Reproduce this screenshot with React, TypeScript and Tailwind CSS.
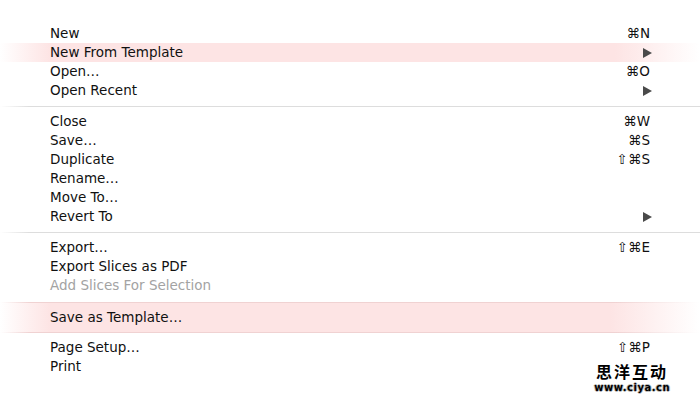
import React from 'react';

type Item = { label: string; shortcut?: string; submenu?: boolean; disabled?: boolean; hot?: boolean };

const groups: Item[][] = [
  [
    { label: 'New', shortcut: '⌘N' },
    { label: 'New From Template', submenu: true, hot: true },
    { label: 'Open…', shortcut: '⌘O' },
    { label: 'Open Recent', submenu: true },
  ],
  [
    { label: 'Close', shortcut: '⌘W' },
    { label: 'Save…', shortcut: '⌘S' },
    { label: 'Duplicate', shortcut: '⇧⌘S' },
    { label: 'Rename…' },
    { label: 'Move To…' },
    { label: 'Revert To', submenu: true },
  ],
  [
    { label: 'Export…', shortcut: '⇧⌘E' },
    { label: 'Export Slices as PDF' },
    { label: 'Add Slices For Selection', disabled: true },
  ],
];

const Arrow = () => (
  <svg width="9" height="10" viewBox="0 0 9 10" className="mr-[-2px]">
    <path d="M0 0 L9 5 L0 10 Z" fill="#4a4a4a" />
  </svg>
);

const Row = ({ item }: { item: Item }) => (
  <div
    className={
      'flex h-[19px] items-center justify-between px-[50px] ' +
      (item.hot ? 'bg-[linear-gradient(to_right,rgba(253,228,228,0),#fde4e4_50px,#fde4e4_615px,rgba(253,228,228,0))]' : '')
    }
  >
    <span className={item.disabled ? 'text-[#a3a3a3]' : 'text-[#111]'}>{item.label}</span>
    {item.shortcut && <span className="text-[#111]">{item.shortcut}</span>}
    {item.submenu && <Arrow />}
  </div>
);

const Separator = () => (
  <div className="pt-[6px] pb-[5px]">
    <div className="h-px bg-[linear-gradient(to_right,rgba(221,221,221,0),#dddddd_30px)]" />
  </div>
);

export default function App() {
  return (
    <div
      className="relative h-[400px] w-[700px] overflow-hidden bg-white pt-[24px] text-[13.5px] leading-[19px]"
      style={{ fontFamily: '"DejaVu Sans", "Noto Sans", sans-serif' }}
    >
      {groups.map((g, i) => (
        <div key={i}>
          {i > 0 && <Separator />}
          {g.map((item) => (
            <Row key={item.label} item={item} />
          ))}
        </div>
      ))}

      <div className="mt-[7px] mb-[5px]">
        <div className="h-px bg-[linear-gradient(to_right,rgba(240,208,208,0),#f0d2d2_30px,#f0d2d2_615px,rgba(240,208,208,0))]" />
        <div className="bg-[linear-gradient(to_right,rgba(253,228,228,0),#fde4e4_50px,#fde4e4_610px,rgba(253,228,228,0))] py-[5px]">
          <div className="flex h-[19px] items-center px-[50px] text-[#111]">Save as Template…</div>
        </div>
        <div className="h-px bg-[linear-gradient(to_right,rgba(240,208,208,0),#f0d2d2_30px,#f0d2d2_615px,rgba(240,208,208,0))]" />
      </div>

      <Row item={{ label: 'Page Setup…', shortcut: '⇧⌘P' }} />
      <Row item={{ label: 'Print' }} />

      {/* watermark */}
      <div className="absolute right-[30px] bottom-[7px] flex flex-col items-center gap-[2px]">
        <div
          className="h-[18px] text-[16px] leading-[18px] font-bold tracking-[2px] text-black"
          style={{ fontFamily: '"Noto Sans CJK SC", sans-serif', textShadow: '1px 0 #fff,-1px 0 #fff,0 1px #fff,0 -1px #fff' }}
        >
          思洋互动
        </div>
        <div
          className="h-[11px] text-[10px] leading-[11px] font-bold tracking-[0.5px] text-black"
          style={{ fontFamily: '"DejaVu Sans", sans-serif', textShadow: '1px 0 #bbb,-1px 0 #bbb,0 1px #bbb,0 -1px #bbb' }}
        >
          www.ciya.cn
        </div>
      </div>
    </div>
  );
}
